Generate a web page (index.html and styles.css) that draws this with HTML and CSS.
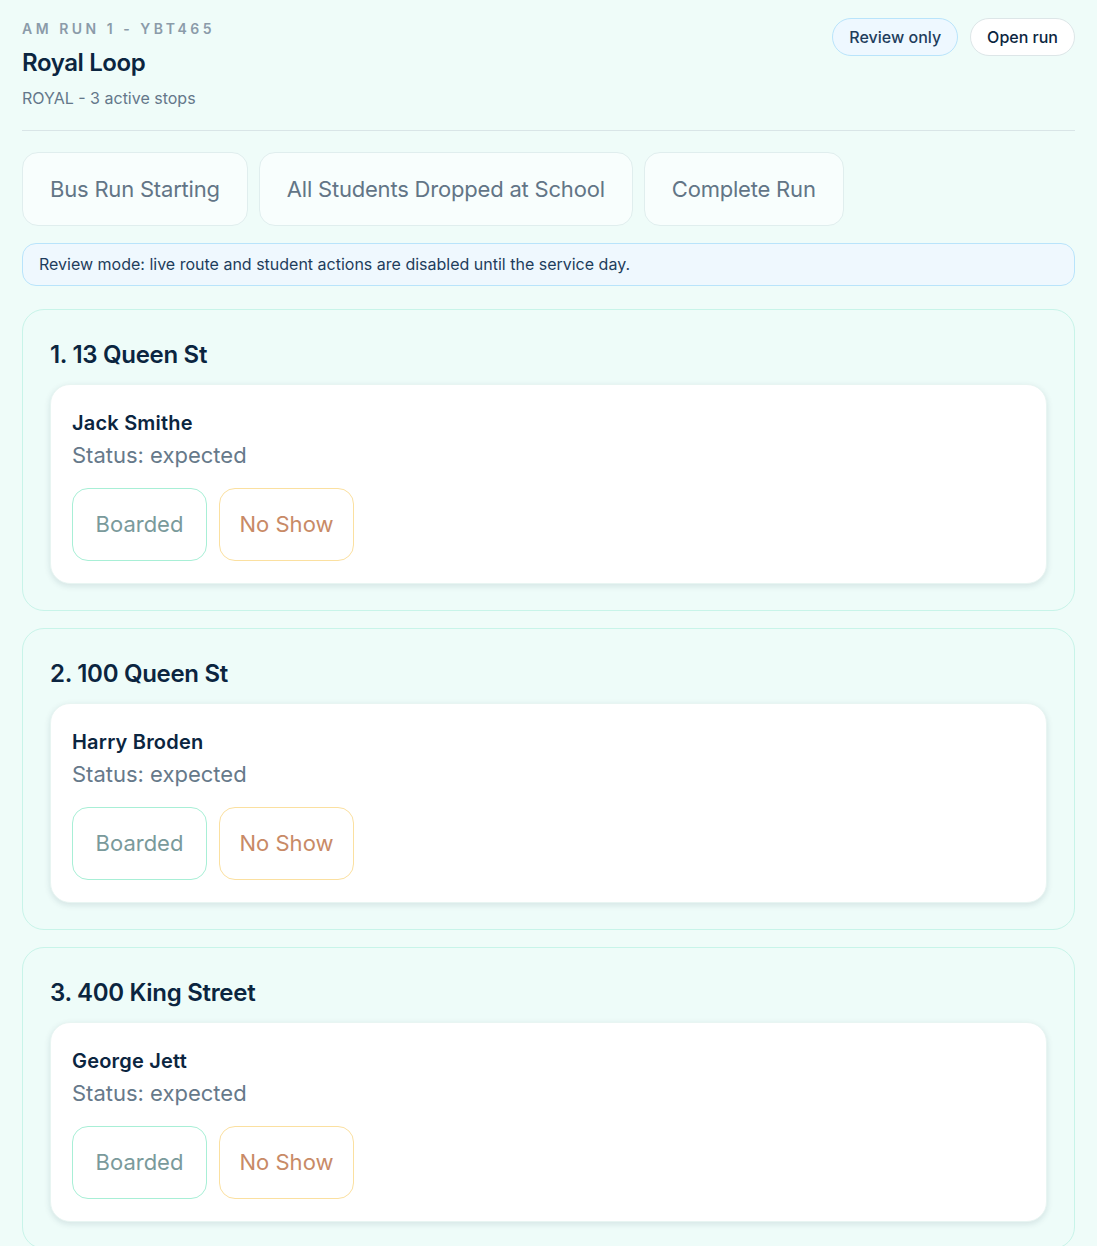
FILE: index.html
```html
<!DOCTYPE html>
<html lang="en">
<head>
<meta charset="utf-8">
<title>Royal Loop</title>
<link rel="stylesheet" href="styles.css">
</head>
<body>
<header class="header">
  <div class="header-left">
    <div class="eyebrow">AM RUN 1 - YBT465</div>
    <h1 class="title">Royal Loop</h1>
    <div class="subtitle">ROYAL - 3 active stops</div>
  </div>
  <div class="header-right">
    <span class="pill pill-review">Review only</span>
    <span class="pill pill-open">Open run</span>
  </div>
</header>

<div class="actions">
  <button class="action">Bus Run Starting</button>
  <button class="action">All Students Dropped at School</button>
  <button class="action">Complete Run</button>
</div>

<div class="notice">Review mode: live route and student actions are disabled until the service day.</div>

<div class="stops">
  <section class="stop">
    <h2 class="stop-title">1. 13 Queen St</h2>
    <div class="student">
      <div class="student-name">Jack Smithe</div>
      <div class="student-status">Status: expected</div>
      <div class="student-actions">
        <button class="sbtn sbtn-boarded">Boarded</button>
        <button class="sbtn sbtn-noshow">No Show</button>
      </div>
    </div>
  </section>
  <section class="stop">
    <h2 class="stop-title">2. 100 Queen St</h2>
    <div class="student">
      <div class="student-name">Harry Broden</div>
      <div class="student-status">Status: expected</div>
      <div class="student-actions">
        <button class="sbtn sbtn-boarded">Boarded</button>
        <button class="sbtn sbtn-noshow">No Show</button>
      </div>
    </div>
  </section>
  <section class="stop">
    <h2 class="stop-title">3. 400 King Street</h2>
    <div class="student">
      <div class="student-name">George Jett</div>
      <div class="student-status">Status: expected</div>
      <div class="student-actions">
        <button class="sbtn sbtn-boarded">Boarded</button>
        <button class="sbtn sbtn-noshow">No Show</button>
      </div>
    </div>
  </section>
</div>
</body>
</html>
```

FILE: styles.css
```css
* { box-sizing: border-box; }

html, body {
  margin: 0;
  background: #effcf9;
}

body {
  padding: 19px 22px 40px;
  font-family: Inter, "Noto Sans", "Liberation Sans", sans-serif;
  color: #0b2540;
}

.header {
  display: flex;
  justify-content: space-between;
  align-items: flex-start;
  padding-bottom: 21px;
  border-bottom: 1px solid #d9e5e7;
}

.eyebrow {
  font-size: 14px;
  line-height: 20px;
  font-weight: 600;
  letter-spacing: 3.5px;
  color: #8b9ba9;
}

.title {
  margin: 9px 0 0;
  font-size: 24px;
  line-height: 30px;
  font-weight: 600;
  letter-spacing: -0.4px;
  color: #0b2540;
}

.subtitle {
  margin-top: 9px;
  font-size: 16px;
  line-height: 22px;
  color: #64778a;
}

.header-right {
  display: flex;
  gap: 12px;
  margin-top: -1px;
}

.pill {
  display: inline-block;
  padding: 7px 16px;
  font-size: 16px;
  line-height: 22px;
  font-weight: 500;
  border-radius: 999px;
  border: 1px solid #dfe8ea;
}

.pill-review {
  background: #eef8ff;
  border-color: #b9e4fb;
  color: #1e3d5c;
}

.pill-open {
  background: #ffffff;
  border-color: #dde6e8;
  color: #0b2540;
}

.actions {
  display: flex;
  gap: 11px;
  margin-top: 21px;
}

.action {
  font-family: inherit;
  font-size: 22px;
  line-height: 28px;
  letter-spacing: -0.2px;
  padding: 22px 27px;
  border: 1px solid #e0eeee;
  border-radius: 16px;
  background: #f8fefd;
  color: #627586;
}

.notice {
  margin-top: 17px;
  padding: 10px 16px;
  font-size: 16px;
  line-height: 21px;
  background: #eff8fe;
  border: 1px solid #b9e4fb;
  border-radius: 14px;
  color: #1e3d5c;
}

.stops {
  display: flex;
  flex-direction: column;
  gap: 17px;
  margin-top: 23px;
}

.stop {
  padding: 29px 27px 26px;
  border: 1px solid #c8f4e9;
  border-radius: 22px;
  background: #eefcf9;
}

.stop-title {
  margin: 0 0 13px;
  font-size: 24px;
  line-height: 32px;
  font-weight: 600;
  letter-spacing: -0.3px;
  color: #0b2540;
}

.student {
  padding: 24px 21px 22px;
  background: #ffffff;
  border: 1px solid #e8f5f2;
  border-radius: 20px;
  box-shadow: 0 2px 6px rgba(20, 50, 70, 0.12);
}

.student-name {
  font-size: 20px;
  line-height: 28px;
  font-weight: 600;
  letter-spacing: 0.2px;
  color: #0b2540;
}

.student-status {
  margin-top: 4px;
  font-size: 22px;
  line-height: 28px;
  color: #66798a;
}

.student-actions {
  display: flex;
  gap: 12px;
  margin-top: 19px;
}

.sbtn {
  width: 135px;
  font-family: inherit;
  font-size: 22px;
  line-height: 27px;
  padding: 22px 0;
  text-align: center;
  border-radius: 16px;
  background: #ffffff;
}

.sbtn-boarded {
  border: 1px solid #a8efd6;
  color: #7a9a9b;
}

.sbtn-noshow {
  border: 1px solid #fbe0a0;
  color: #c88a66;
}
```
